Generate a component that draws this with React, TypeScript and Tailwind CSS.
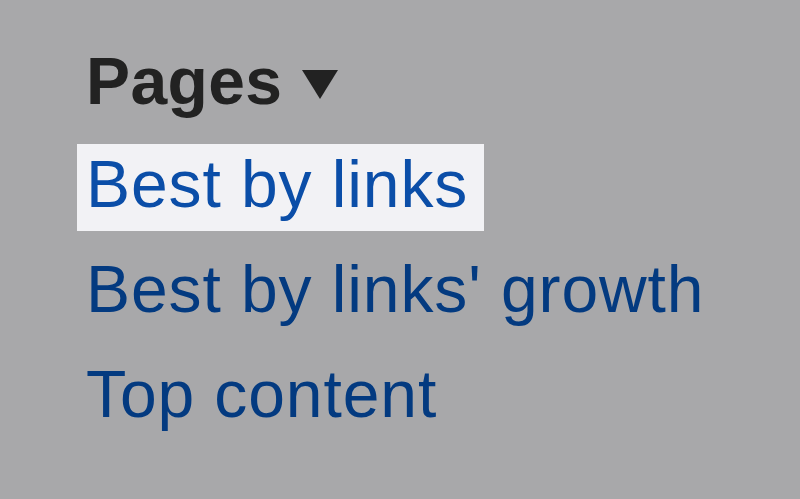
export default function App() {
  return (
    <div className="w-[800px] h-[499px] bg-[#a8a8aa] overflow-hidden font-['Liberation_Sans',Arial,sans-serif]">
      <div className="flex flex-col pt-[38px] pl-[77px]">
        <div className="flex items-start h-[87px] pl-[9px] gap-[20px] mb-[19px]">
          <span className="text-[66px] leading-[87px] font-bold tracking-[0.4px] text-[#222222]">Pages</span>
          <svg width="36" height="29" viewBox="0 0 36 29" className="mt-[32px]">
            <polygon points="0,0 36,0 18,29" fill="#222222" />
          </svg>
        </div>
        <a className="block w-[407px] h-[87px] mb-[18px] bg-[#f2f2f5] pl-[9px] text-[66px] leading-[81px] tracking-[0.9px] text-[#0b4ea8] whitespace-nowrap">
          Best by links
        </a>
        <a className="block h-[87px] mb-[18px] pl-[9px] text-[66px] leading-[81px] tracking-[0.9px] text-[#033a80] whitespace-nowrap">
          Best by links' growth
        </a>
        <a className="block h-[87px] pl-[9px] text-[66px] leading-[81px] tracking-[0.9px] text-[#033a80] whitespace-nowrap">
          Top content
        </a>
      </div>
    </div>
  );
}
